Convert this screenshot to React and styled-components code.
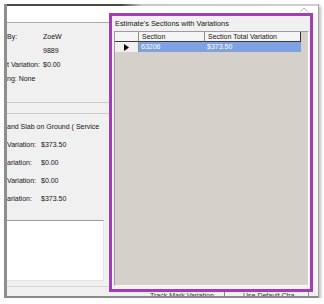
import React from "react";
import styled, { createGlobalStyle } from "styled-components";

const GlobalStyle = createGlobalStyle`
  html, body {
    margin: 0;
    padding: 0;
    background: #fff;
  }
  body {
    font-family: "Liberation Sans", Arial, sans-serif;
    color: #141414;
  }
`;

const Window = styled.div`
  margin: 4px 0 0 4px;
  width: 311px;
  border-left: 3px solid #8e8e8e;
  border-right: 1px solid #a4a4a4;
  border-bottom: 2px solid #8a8a8a;
  box-shadow: 2px 2px 3px rgba(0, 0, 0, 0.25);
  display: flex;
  flex-direction: column;
`;

const TopEdge = styled.div`
  height: 2px;
  background: linear-gradient(to right, #4a4a4a 0, #4a4a4a 115px, #c9c9c9 135px, #cfcfcf 100%);
`;

const Body = styled.div`
  height: 290px;
  display: grid;
  grid-template-columns: 102px 209px;
`;

/* left panel */

const LeftPanel = styled.div`
  background: #f0f0f0;
  overflow: hidden;
  display: flex;
  flex-direction: column;
  font-size: 7px;
`;

const WhiteStrip = styled.div`
  height: 16px;
  background: #fff;
  border-bottom: 1px solid #a9a9a9;
`;

const InfoGroup = styled.div`
  height: 79px;
  box-sizing: border-box;
  padding-top: 7px;
`;

const InfoRow = styled.div`
  height: 14px;
  line-height: 14px;
  display: grid;
  grid-template-columns: ${(p) => p.$label || 36}px auto;
  white-space: nowrap;
`;

const Divider = styled.div`
  height: 10px;
  border-top: 1px solid #cbcbcb;
  border-bottom: 1px solid #cbcbcb;
`;

const LowerGroup = styled.div`
  height: 106px;
  box-sizing: border-box;
  padding-top: 4px;
`;

const LowerRow = styled(InfoRow)`
  height: 18px;
  line-height: 18px;
`;

const NotesBox = styled.div`
  height: 59px;
  width: 96px;
  background: #fff;
  border-top: 1px solid #9b9b9b;
  border-right: 1px solid #e4e4e4;
  border-bottom: 1px solid #e4e4e4;
`;

const LeftFooter = styled.div`
  margin-top: 5px;
  height: 9px;
  border-top: 1px solid #d6d6d6;
`;

/* right panel */

const RightPanel = styled.div`
  display: grid;
  grid-template-columns: 204px 5px;
  grid-template-rows: 7px 279px 4px;
  background: #f6f6f6;
`;

const TopBar = styled.div`
  grid-column: 1 / 3;
  background: #fff;
  display: flex;
  justify-content: flex-end;
  align-items: flex-start;
  padding-right: 10px;
`;

const PurpleFrame = styled.div`
  box-sizing: border-box;
  border: 3px solid #a23db3;
  background: #f0f0f0;
  display: flex;
  flex-direction: column;
`;

const Title = styled.div`
  height: 15px;
  line-height: 15px;
  padding-left: 3px;
  font-size: 7.4px;
  white-space: nowrap;
`;

const GridPanel = styled.div`
  flex: 1;
  margin: 0 1px 3px 2px;
  border: 1px solid;
  border-color: #9c9c9c #fafafa #fafafa #9c9c9c;
  background: #d5d1ca;
`;

const Table = styled.div`
  display: grid;
  grid-template-columns: 24px 66px 96px;
  grid-auto-rows: 10px;
  font-size: 7px;
`;

const HeadCell = styled.div`
  box-sizing: border-box;
  background: #f5f5f5;
  border-right: 1px solid ${(p) => (p.$last ? "#2e2e2e" : "#8d8d8d")};
  border-bottom: 1px solid #3a3a3a;
  line-height: 9px;
  padding-left: 3px;
  white-space: nowrap;
  overflow: hidden;
`;

const RowHead = styled.div`
  box-sizing: border-box;
  background: #f0f0f0;
  border-right: 1px solid #8d8d8d;
  display: flex;
  align-items: center;
  justify-content: center;
`;

const DataCell = styled.div`
  background: #7fa2e2;
  color: #fff;
  line-height: 10px;
  padding-left: 2px;
  white-space: nowrap;
`;

const Gutter = styled.div`
  background: #f6f6f6;
`;

const StatusRow = styled.div`
  grid-column: 1 / 3;
  overflow: hidden;
  display: flex;
  background: #f0f0f0;
  font-size: 7px;
  line-height: 8px;
  white-space: nowrap;
`;

const StatusItem = styled.div`
  width: ${(p) => p.$w}px;
  padding-left: ${(p) => p.$pad || 0}px;
  box-sizing: border-box;
  border-right: ${(p) => (p.$divider ? "1px solid #8a8a8a" : "none")};
  color: #333;
`;

const Arrow = () => (
  <svg width="5" height="7" viewBox="0 0 5 7">
    <polygon points="0,0 5,3.5 0,7" fill="#000" />
  </svg>
);

const Chevron = () => (
  <svg width="8" height="5" viewBox="0 0 8 5" style={{ marginTop: 1 }}>
    <polyline points="0.5,4.5 4,1 7.5,4.5" fill="none" stroke="#b8b8b8" strokeWidth="1" />
  </svg>
);

const info = [
  { label: "By:", value: "ZoeW" },
  { label: "", value: "9889" },
  { label: "t Variation:", value: "$0.00" },
];

const variations = [
  { label: "Variation:", value: "$373.50" },
  { label: "ariation:", value: "$0.00" },
  { label: "Variation:", value: "$0.00" },
  { label: "ariation:", value: "$373.50" },
];

export default function App() {
  return (
    <>
      <GlobalStyle />
      <Window>
        <TopEdge />
        <Body>
          <LeftPanel>
            <WhiteStrip />
            <InfoGroup>
              {info.map((r, i) => (
                <InfoRow key={i}>
                  <span>{r.label}</span>
                  <span>{r.value}</span>
                </InfoRow>
              ))}
              <InfoRow $label={102}>
                <span>ng: None</span>
              </InfoRow>
            </InfoGroup>
            <Divider />
            <LowerGroup>
              <LowerRow $label={102}>
                <span>and Slab on Ground ( Service</span>
              </LowerRow>
              {variations.map((r, i) => (
                <LowerRow key={i} $label={34}>
                  <span>{r.label}</span>
                  <span>{r.value}</span>
                </LowerRow>
              ))}
            </LowerGroup>
            <NotesBox />
            <LeftFooter />
          </LeftPanel>

          <RightPanel>
            <TopBar>
              <Chevron />
            </TopBar>
            <PurpleFrame>
              <Title>Estimate's Sections with Variations</Title>
              <GridPanel>
                <Table>
                  <HeadCell />
                  <HeadCell>Section</HeadCell>
                  <HeadCell $last>Section Total Variation</HeadCell>
                  <RowHead>
                    <Arrow />
                  </RowHead>
                  <DataCell>63206</DataCell>
                  <DataCell>$373.50</DataCell>
                </Table>
              </GridPanel>
            </PurpleFrame>
            <Gutter />
            <StatusRow>
              <StatusItem $w={41} />
              <StatusItem $w={75} $divider>
                Track Mark Variation
              </StatusItem>
              <StatusItem $w={84} $pad={18} $divider>
                Use Default Cha
              </StatusItem>
            </StatusRow>
          </RightPanel>
        </Body>
      </Window>
    </>
  );
}
